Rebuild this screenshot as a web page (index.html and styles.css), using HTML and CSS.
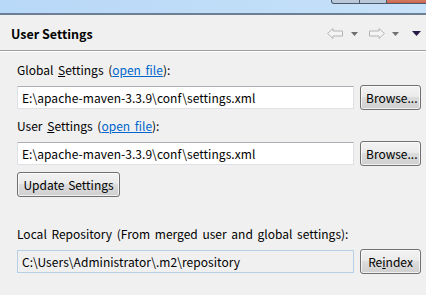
FILE: index.html
```html
<!DOCTYPE html>
<html>
<head>
<meta charset="utf-8">
<link rel="stylesheet" href="styles.css">
</head>
<body>
<div class="titlebar">
  <div class="winbtns">
    <span class="wb wb-min"></span><span class="wb wb-max"></span><span class="wb wb-close"></span>
  </div>
</div>
<div class="header">
  <div class="title">User Settings</div>
  <div class="nav">
    <svg class="arrow back" width="16" height="11" viewBox="0 0 16 11"><path d="M0.5 5.5 L6 0.5 L6 3 L15.5 3 L15.5 8 L6 8 L6 10.5 Z" fill="#f4f4f4" stroke="#b4b4b4" stroke-width="1"/></svg>
    <svg class="tri t1" width="8" height="4" viewBox="0 0 8 4"><path d="M0 0 H7 L3.5 4 Z" fill="#707070"/></svg>
    <svg class="arrow fwd" width="16" height="11" viewBox="0 0 16 11"><path d="M15.5 5.5 L10 0.5 L10 3 L0.5 3 L0.5 8 L10 8 L10 10.5 Z" fill="#f4f4f4" stroke="#b4b4b4" stroke-width="1"/></svg>
    <svg class="tri t2" width="8" height="4" viewBox="0 0 8 4"><path d="M0 0 H7 L3.5 4 Z" fill="#707070"/></svg>
    <svg class="tri dark" width="9" height="5" viewBox="0 0 9 5"><path d="M0 0 H9 L4.5 5 Z" fill="#2a1a4a"/></svg>
  </div>
</div>
<div class="content">
  <div class="label">Global <u>S</u>ettings (<a href="#">open file</a>):</div>
  <div class="row">
    <div class="field">E:\apache-maven-3.3.9\conf\settings.xml</div>
    <button class="btn browse">Browse...</button>
  </div>
  <div class="label">User <u>S</u>ettings (<a href="#">open file</a>):</div>
  <div class="row">
    <div class="field">E:\apache-maven-3.3.9\conf\settings.xml</div>
    <button class="btn browse">Browse...</button>
  </div>
  <button class="btn update">Update Settings</button>
  <div class="label local">Local Repository (From merged user and global settings):</div>
  <div class="row">
    <div class="field readonly">C:\Users\Administrator\.m2\repository</div>
    <button class="btn browse">Re<u>i</u>ndex</button>
  </div>
</div>
</body>
</html>
```
FILE: styles.css
```css
html, body {
  margin: 0;
  padding: 0;
  background: #f0f0f0;
  width: 426px;
  height: 295px;
  overflow: hidden;
  font-family: "Noto Sans CJK SC", "Open Sans", sans-serif;
  font-size: 12px;
  color: #000;
}
.titlebar {
  position: relative;
  height: 13px;
  background: linear-gradient(to right, #b8d8f8, #c2def8 70%, #c8e2fa);
  border-bottom: 2px solid #6d7f93;
}
.winbtns {
  position: absolute;
  left: 331px;
  top: -2px;
  display: flex;
}
.wb {
  display: block;
  height: 5px;
  border: 1px solid #4b5a6d;
  border-top: none;
}
.wb-min {
  width: 27px;
  background: #b9c8d9;
  border-radius: 0 0 0 3px;
}
.wb-max {
  width: 26px;
  background: #b9c8d9;
  border-left: none;
}
.wb-close {
  width: 40px;
  background: linear-gradient(#d98a74, #c9644a);
  border-left: none;
}
.header {
  height: 35px;
  display: flex;
  align-items: center;
  justify-content: space-between;
  padding: 0 5px 0 11px;
  border-bottom: 1px solid #a0a0a0;
  box-shadow: 0 1px 0 #ffffff;
}
.title {
  font-weight: bold;
  font-size: 12.5px;
  margin-top: 2px;
}
.nav {
  display: flex;
  align-items: center;
  margin-top: 2px;
}
.nav .back { margin-right: 8px; }
.nav .t1 { margin-right: 10px; }
.nav .fwd { margin-right: 7px; }
.nav .t2 { margin-right: 12px; }
.content {
  padding: 8px 5px 0 17px;
}
.label {
  height: 19px;
  line-height: 19px;
  word-spacing: 2px;
  margin-top: 1px;
}
.label u { text-decoration: underline; }
.label a {
  color: #0066cc;
  text-decoration: underline;
}
.label.local {
  margin-top: 27px;
}
.row {
  display: flex;
  align-items: center;
  gap: 6px;
  margin-top: 6px;
  margin-bottom: 6px;
}
.field {
  box-sizing: border-box;
  width: 337px;
  height: 23px;
  line-height: 21px;
  padding: 0 4px;
  background: #ffffff;
  border: 1px solid #dde1e6;
  border-top-color: #abadb3;
  white-space: nowrap;
  overflow: hidden;
  letter-spacing: 0.05px;
}
.field.readonly {
  background: #f0f0f0;
  border-color: #b5cfe7;
}
.btn {
  box-sizing: border-box;
  height: 25px;
  font: inherit;
  color: #000;
  padding: 0 5px;
  border: 1px solid #707070;
  border-radius: 3px;
  background: linear-gradient(#f2f2f2 0%, #ebebeb 45%, #dddddd 50%, #cfcfcf 100%);
  box-shadow: inset 0 0 0 1px rgba(255,255,255,0.7);
}
.btn.browse {
  width: 61px;
}
.btn.update {
  width: 103px;
  display: block;
  word-spacing: 1px;
}
```
